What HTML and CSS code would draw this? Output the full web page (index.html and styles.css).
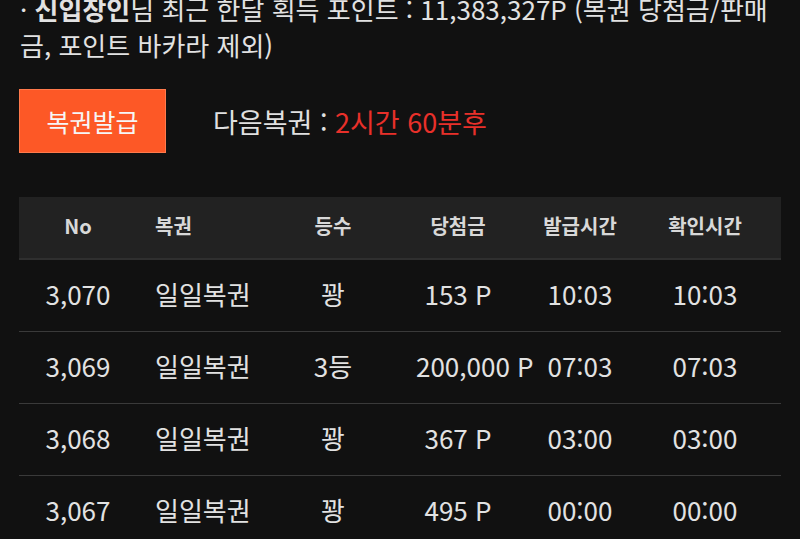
FILE: index.html
```html
<!DOCTYPE html>
<html lang="ko">
<head>
<meta charset="utf-8">
<link rel="stylesheet" href="styles.css">
</head>
<body>
<div class="page">
  <p class="notice">· <b>신입장인</b>님 최근 한달 획득 포인트 : 11,383,327P (복권 당첨금/판매<br>금, 포인트 바카라 제외)</p>
  <div class="issue">
    <button class="btn">복권발급</button>
    <span class="next">다음복권 : <span class="red">2시간 60분후</span></span>
  </div>
  <div class="table">
    <div class="row head">
      <div class="c1">No</div><div class="c2">복권</div><div class="c3">등수</div><div class="c4">당첨금</div><div class="c5">발급시간</div><div class="c6">확인시간</div>
    </div>
    <div class="row">
      <div class="c1">3,070</div><div class="c2">일일복권</div><div class="c3">꽝</div><div class="c4">153 P</div><div class="c5">10:03</div><div class="c6">10:03</div>
    </div>
    <div class="row">
      <div class="c1">3,069</div><div class="c2">일일복권</div><div class="c3">3등</div><div class="c4">200,000 P</div><div class="c5">07:03</div><div class="c6">07:03</div>
    </div>
    <div class="row">
      <div class="c1">3,068</div><div class="c2">일일복권</div><div class="c3">꽝</div><div class="c4">367 P</div><div class="c5">03:00</div><div class="c6">03:00</div>
    </div>
    <div class="row">
      <div class="c1">3,067</div><div class="c2">일일복권</div><div class="c3">꽝</div><div class="c4">495 P</div><div class="c5">00:00</div><div class="c6">00:00</div>
    </div>
  </div>
</div>
</body>
</html>
```
FILE: styles.css
```css
html, body {
  margin: 0;
  padding: 0;
  background: #111111;
  overflow: hidden;
}
body {
  font-family: "Noto Sans CJK KR", "Noto Sans", sans-serif;
  color: #e2e2e2;
}
.page {
  padding: 0 19px;
}
.notice {
  margin: -9px 0 0;
  padding-left: 1px;
  font-size: 26px;
  line-height: 36px;
  white-space: nowrap;
}
.notice b {
  font-weight: 700;
}
.issue {
  display: flex;
  align-items: center;
  margin-top: 26px;
  gap: 47px;
}
.btn {
  width: 147px;
  height: 64px;
  background: #fd5826;
  border: 1px solid #ff7a4c;
  color: #f6f6f6;
  font-family: inherit;
  font-size: 25px;
  padding: 0;
}
.next {
  font-size: 27px;
  color: #e0e0e0;
}
.red {
  color: #e8302a;
}
.table {
  margin-top: 44px;
}
.row {
  display: grid;
  grid-template-columns: 118px 133px 126px 124px 120px 130px;
  height: 71px;
  align-items: center;
  border-bottom: 1px solid #3a3a3a;
  font-size: 26px;
  white-space: nowrap;
}
.row:last-child {
  border-bottom: none;
}
.row.head {
  height: 61px;
  background: #222222;
  border-bottom: 2px solid #2f2f2f;
  font-size: 20px;
  font-weight: 700;
  color: #d8d8d8;
}
.row > div {
  text-align: center;
  line-height: 1.2;
  padding-bottom: 3px;
}
.row > .c2 {
  text-align: left;
  padding-left: 18px;
}
.row > .c4 {
  padding-left: 20px;
  padding-right: 20px;
  min-width: 0;
}
```
